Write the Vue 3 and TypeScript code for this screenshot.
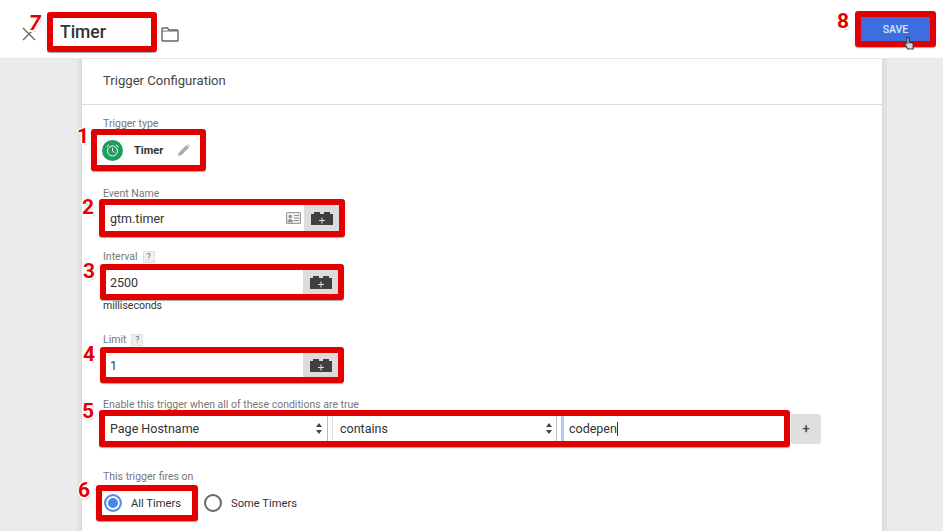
<script setup lang="ts">
const brick = "M1 5H4V3H10V5H14V3H20V5H23V16H1Z";
</script>

<template>
  <div class="page">
    <header class="topbar">
      <div class="title-group">
        <span class="close-wrap">
          <svg class="close" width="16" height="16" viewBox="0 0 16 16"><path d="M2 2L14 14M14 2L2 14" stroke="#666" stroke-width="1.4" fill="none"/></svg>
          <span class="badge badge-7">7</span>
        </span>
        <div class="mark mark-title"><span class="title">Timer</span></div>
        <svg class="folder" width="18" height="15" viewBox="0 0 18 15"><path d="M1 13.5V2A1 1 0 0 1 2 1H6.5L8 3H16A1 1 0 0 1 17 4V13.5A.5 .5 0 0 1 16.5 14H1.5A.5 .5 0 0 1 1 13.5Z" fill="none" stroke="#666" stroke-width="1.4"/><path d="M1 4H17" stroke="#666" stroke-width="1"/></svg>
      </div>
      <div class="mark mark-save">
        <span class="badge badge-8">8</span>
        <button class="save">SAVE</button>
        <svg class="hand" width="11" height="15" viewBox="0 0 12 16"><path d="M3 1.5V8L1 7V9L4 14H10V8L8 7H5.500V1.500Z" fill="#cfd6e4" stroke="#3a3a3a" stroke-width="1.300"/></svg>
      </div>
    </header>

    <main class="canvas">
      <section class="card">
        <h2 class="card-title">Trigger Configuration</h2>
        <div class="form">
          <label class="label l-type">Trigger type</label>
          <div class="mark mark-type">
            <span class="badge badge-1">1</span>
            <div class="type">
              <span class="type-icon">
                <svg width="15" height="15" viewBox="0 0 15 15" fill="none" stroke="#fff" stroke-width="1"><circle cx="7.5" cy="8" r="5"/><path d="M7.500 5V8L9.500 9.500M1.500 4L4 1.800M13.500 4L11 1.800"/></svg>
              </span>
              <span class="type-name">Timer</span>
              <svg class="pencil" width="12" height="12" viewBox="0 0 12 12"><path d="M0 12L.8 8.700L8.500 1L11 3.500L3.300 11.200ZM9.200 .3L10 0L12 2L11.700 2.800Z" fill="#aaa"/></svg>
            </div>
          </div>

          <label class="label l-event">Event Name</label>
          <div class="mark mark-field">
            <span class="badge badge-2">2</span>
            <div class="field">
              <span class="value">gtm.timer</span>
              <svg class="var-icon" width="15" height="12" viewBox="0 0 15 12"><rect width="15" height="12" rx="1.500" fill="#9c9c9c"/><rect x="1.200" y="1.200" width="12.600" height="9.600" fill="#f4f4f4"/><circle cx="4.300" cy="4.500" r="1.700" fill="#8e8e8e"/><path d="M2 9.800C2 6.800 6.600 6.800 6.600 9.800ZM8 3.500H13M8 6H13M8 8.500H13" fill="#8e8e8e" stroke="#8e8e8e"/></svg>
              <span class="add"><svg width="22" height="13" viewBox="1 3 22 13"><path :d="brick" fill="#3f3f3f"/><path d="M12 8.500V14.500M9 11.500H15" stroke="#ddd" stroke-width="1.100"/></svg></span>
            </div>
          </div>

          <label class="label l-interval">Interval <span class="help">?</span></label>
          <div class="mark mark-field mark-narrow">
            <span class="badge badge-3">3</span>
            <div class="field">
              <span class="value">2500</span>
              <span class="add"><svg width="22" height="13" viewBox="1 3 22 13"><path :d="brick" fill="#3f3f3f"/><path d="M12 8.500V14.500M9 11.500H15" stroke="#ddd" stroke-width="1.100"/></svg></span>
            </div>
          </div>
          <p class="unit">milliseconds</p>

          <label class="label l-limit">Limit <span class="help">?</span></label>
          <div class="mark mark-field mark-narrow">
            <span class="badge badge-3">4</span>
            <div class="field">
              <span class="value">1</span>
              <span class="add"><svg width="22" height="13" viewBox="1 3 22 13"><path :d="brick" fill="#3f3f3f"/><path d="M12 8.500V14.500M9 11.500H15" stroke="#ddd" stroke-width="1.100"/></svg></span>
            </div>
          </div>

          <label class="label l-cond">Enable this trigger when all of these conditions are true</label>
          <div class="cond-row">
            <div class="mark mark-cond">
              <span class="badge badge-5">5</span>
              <div class="cond">
                <div class="select s-first"><span>Page Hostname</span><i class="updown"></i></div>
                <div class="select s-second"><span>contains</span><i class="updown"></i></div>
                <div class="text-in"><span>codepen</span><i class="caret"></i></div>
              </div>
            </div>
            <span class="plus">+</span>
          </div>

          <label class="label l-fires">This trigger fires on</label>
          <div class="radios">
            <div class="mark mark-radio">
              <span class="badge badge-6">6</span>
              <span class="radio on"></span><span class="radio-text">All Timers</span>
            </div>
            <span class="radio"></span><span class="radio-text">Some Timers</span>
          </div>
        </div>
      </section>
    </main>
  </div>
</template>

<style>
html, body { margin: 0; }
</style>

<style scoped>
.page {
  width: 943px;
  height: 531px;
  overflow: hidden;
  background: #ebebeb;
  font-family: Roboto, "Liberation Sans", sans-serif;
  color: #333;
}
.topbar {
  position: relative;
  z-index: 1;
  height: 59px;
  box-sizing: border-box;
  background: #fff;
  border-bottom: 1px solid #e6e6e6;
  display: flex;
  justify-content: space-between;
  padding: 11px 7px 0 21px;
  align-items: flex-start;
}
.title-group { display: flex; align-items: center; padding-top: 1px; }
.close-wrap { position: relative; width: 26px; height: 16px; display: block; margin-top: 4px; }
.close { display: block; }
.mark {
  position: relative;
  box-sizing: border-box;
  border: 6px solid #e30000;
  border-radius: 3px;
  box-shadow: 0 1px 1px rgba(0,0,0,.35);
  background: #fff;
}
.mark-title { width: 110px; height: 40px; display: flex; align-items: center; }
.title { font-size: 17.5px; font-weight: 500; line-height: 24px; margin-top: 0; color: #333; padding-left: 7px; }
.folder { margin-left: 4px; margin-top: 4px; }
.mark-save { width: 81px; height: 36px; }
.save {
  display: block;
  width: 100%;
  height: 100%;
  padding: 0;
  border: 0;
  background: #3c6ee0;
  color: #dbe6fb;
  font: 500 10.5px Roboto, sans-serif;
}
.hand { position: absolute; left: 43px; top: 19px; }
.badge {
  position: absolute;
  font: 700 21px/21px Roboto, sans-serif;
  color: #e30000;
  text-shadow: -1.500px 0 #fff, 1.500px 0 #fff, 0 -1.500px #fff, 0 1.500px #fff, -1px -1px #fff, 1px -1px #fff, -1px 1px #fff, 1px 1px #fff, 1px 2px 1px #aaa;
}
.badge-7 { left: 8px; top: -13px; transform: skewX(-8deg); }
.badge-8 { left: -24px; top: -6px; }
.badge-1 { left: -20px; top: -9px; }
.badge-2 { left: -23px; top: -8px; }
.badge-3 { left: -23px; top: -9px; }
.badge-5 { left: -23px; top: -15px; }
.badge-6 { left: -24px; top: -11px; }

.canvas { padding-left: 82px; }
.card {
  width: 800px;
  height: 473px;
  background: #fff;
  box-shadow: -1px 0 0 #d9d9d9, 1px 0 0 #d9d9d9, -5px 0 0 #e2e2e2, 5px 0 0 #e2e2e2;
}
.card-title {
  margin: 0;
  height: 46px;
  box-sizing: border-box;
  border-bottom: 1px solid #ddd;
  padding: 14px 0 0 21px;
  font-size: 13.1px;
  line-height: 16px;
  font-weight: 400;
  color: #444;
}
.form { padding-left: 21px; position: relative; }
.label { display: block; font-size: 10.5px; line-height: 12px; height: 11px; color: #777; }
.l-type { margin-top: 13px; }
.l-event { margin-top: 17px; }
.l-interval { margin-top: 13px; display: flex; gap: 5px; align-items: center; height: 14px; }
.l-limit { margin-top: 21px; display: flex; gap: 5px; align-items: center; height: 14px; }
.l-cond { margin-top: 16px; }
.l-fires { margin-top: 24px; }
.help {
  width: 12px;
  height: 12px;
  background: #efefef;
  border: 1px solid #e2e2e2;
  box-sizing: border-box;
  text-align: center;
  font-size: 9px;
  line-height: 10px;
  color: #777;
}
.mark-type { width: 115px; height: 42px; margin-left: -12px; margin-top: 0; }
.type { display: flex; align-items: center; height: 30px; padding-left: 5px; }
.type-icon {
  width: 21px; height: 21px; border-radius: 50%;
  background: #1f9d5d;
  display: flex; align-items: center; justify-content: center;
}
.type-name { font-size: 11px; font-weight: 700; margin-left: 11px; color: #333; }
.pencil { margin-left: 15px; }
.mark-field { width: 246px; height: 38px; margin-left: -4px; }
.mark-narrow { width: 244px; height: 36px; margin-left: -3px; }
.field { display: flex; align-items: center; height: 100%; }
.value { flex: 1; padding-left: 5px; font-size: 12.5px; color: #333; }
.mark-narrow .value { padding-left: 4px; }
.var-icon { margin-right: 3px; }
.add {
  width: 35px; height: 100%;
  background: #dcdcdc;
  display: flex; align-items: center; justify-content: center;
  flex: none;
}
.unit { margin: 0; font-size: 10.5px; line-height: 12px; color: #333; }
.cond-row { display: flex; align-items: center; margin-left: -4px; }
.mark-cond { width: 691px; height: 37px; }
.cond { display: flex; height: 100%; font-size: 12.5px; color: #333; }
.select {
  flex: none;
  display: flex;
  align-items: center;
  justify-content: space-between;
  box-sizing: border-box;
  padding: 0 4px 0 5px;
  border-right: 1px solid #bbb;
}
.s-first { width: 223px; }
.s-second { width: 225px; margin-left: 4px; padding-right: 3px; border-left: 1px solid #ddd; padding-left: 7px; }
.updown {
  display: block; width: 7px; height: 11px; position: relative;
}
.updown::before, .updown::after {
  content: ""; position: absolute; left: 0;
  border-left: 3.500px solid transparent; border-right: 3.500px solid transparent;
}
.updown::before { top: 0; border-bottom: 4.500px solid #444; }
.updown::after { bottom: 0; border-top: 4.500px solid #444; }
.text-in {
  flex: 1; margin-left: 4px; display: flex; align-items: center;
  padding-left: 8px;
  box-shadow: inset 3px 0 0 #a8ccf5;
}
.caret { display: block; width: 1px; height: 14px; background: #333; }
.plus {
  width: 30px; height: 30px; margin-left: 1px;
  background: #dfdfdf; border-radius: 2px;
  text-align: center; line-height: 30px; font-size: 13px; font-weight: 500; color: #444;
}
.radios { display: flex; align-items: center; margin-left: -7px; margin-top: 3px; }
.mark-radio { width: 102px; height: 36px; display: flex; align-items: center; padding-left: 2px; margin-right: 6px; }
.radio {
  display: block; flex: none; box-sizing: border-box;
  width: 18px; height: 18px; border-radius: 50%;
  border: 2px solid #666;
  background: #fff;
}
.radio.on {
  border: 2px solid #5b8fe0;
  background: #4a86e8;
  box-shadow: inset 0 0 0 2px #fff;
}
.radio-text { font-size: 11.2px; margin-left: 9px; color: #333; }
</style>
